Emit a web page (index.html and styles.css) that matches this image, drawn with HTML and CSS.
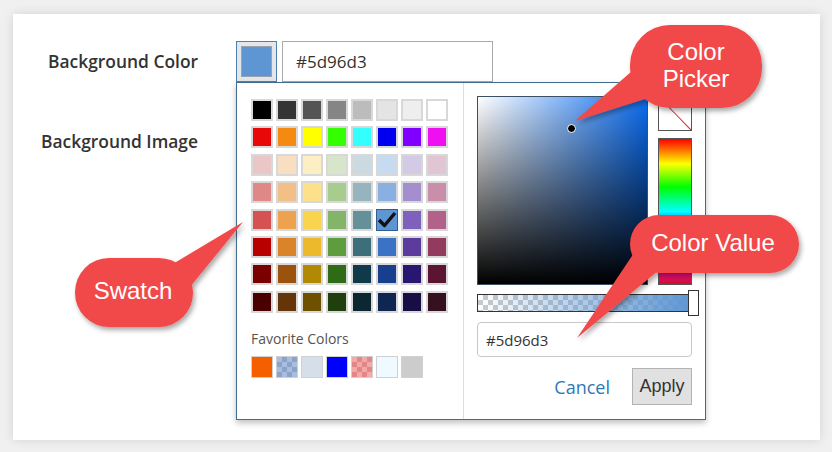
FILE: index.html
```html
<!DOCTYPE html>
<html lang="en">
<head>
    <meta charset="UTF-8">
    <meta name="viewport" content="width=device-width, initial-scale=1.0">
    <title>Color Picker</title>
    <link rel="stylesheet" href="styles.css">
</head>
<body>
    <div class="page">
        <div class="card">
            <div class="field">
                <label class="field-label">Background Color</label>
                <div class="color-control">
                    <button class="swatch-btn" type="button"><span class="swatch-chip"></span></button>
                    <input class="hex-input" type="text" value="#5d96d3">

                    <div class="picker">
                        <div class="picker-left">
                            <div class="swatch-grid">
                                <span class="sw" style="background:#000000"></span>
                                <span class="sw" style="background:#343434"></span>
                                <span class="sw" style="background:#545454"></span>
                                <span class="sw" style="background:#858585"></span>
                                <span class="sw" style="background:#bcbcbc"></span>
                                <span class="sw" style="background:#e4e4e4"></span>
                                <span class="sw" style="background:#eeeeee"></span>
                                <span class="sw" style="background:#ffffff"></span>

                                <span class="sw" style="background:#e80808"></span>
                                <span class="sw" style="background:#f58a10"></span>
                                <span class="sw" style="background:#ffff00"></span>
                                <span class="sw" style="background:#33ff00"></span>
                                <span class="sw" style="background:#33ffff"></span>
                                <span class="sw" style="background:#0000ee"></span>
                                <span class="sw" style="background:#7f00ff"></span>
                                <span class="sw" style="background:#f00ff0"></span>

                                <span class="sw" style="background:#ebc6c6"></span>
                                <span class="sw" style="background:#f8dfc1"></span>
                                <span class="sw" style="background:#fdefc4"></span>
                                <span class="sw" style="background:#d7e5cb"></span>
                                <span class="sw" style="background:#cbdae0"></span>
                                <span class="sw" style="background:#c6daf0"></span>
                                <span class="sw" style="background:#d3cbe5"></span>
                                <span class="sw" style="background:#e2c5d3"></span>

                                <span class="sw" style="background:#e08787"></span>
                                <span class="sw" style="background:#f2c087"></span>
                                <span class="sw" style="background:#fce08a"></span>
                                <span class="sw" style="background:#a8cc8e"></span>
                                <span class="sw" style="background:#95b4bd"></span>
                                <span class="sw" style="background:#8ab0e2"></span>
                                <span class="sw" style="background:#a38fcd"></span>
                                <span class="sw" style="background:#c98ea9"></span>

                                <span class="sw" style="background:#d45252"></span>
                                <span class="sw" style="background:#eda24f"></span>
                                <span class="sw" style="background:#f9d54f"></span>
                                <span class="sw" style="background:#83b569"></span>
                                <span class="sw" style="background:#65909a"></span>
                                <span class="sw sw-selected" style="background:#5d96d3">
                                    <svg viewBox="0 0 20 20" width="20" height="20"><polyline points="2,10 7.5,15.5 18,3" fill="none" stroke="#111" stroke-width="3.4" stroke-linejoin="round"/></svg>
                                </span>
                                <span class="sw" style="background:#7d61bc"></span>
                                <span class="sw" style="background:#b26289"></span>

                                <span class="sw" style="background:#b80000"></span>
                                <span class="sw" style="background:#db8329"></span>
                                <span class="sw" style="background:#ebb92b"></span>
                                <span class="sw" style="background:#5e9d3e"></span>
                                <span class="sw" style="background:#3d6f7b"></span>
                                <span class="sw" style="background:#3a73c5"></span>
                                <span class="sw" style="background:#5b3c9c"></span>
                                <span class="sw" style="background:#933b5f"></span>

                                <span class="sw" style="background:#7a0000"></span>
                                <span class="sw" style="background:#9a520c"></span>
                                <span class="sw" style="background:#b08a05"></span>
                                <span class="sw" style="background:#2f6b16"></span>
                                <span class="sw" style="background:#10394a"></span>
                                <span class="sw" style="background:#173f8d"></span>
                                <span class="sw" style="background:#281670"></span>
                                <span class="sw" style="background:#5c1433"></span>

                                <span class="sw" style="background:#4a0000"></span>
                                <span class="sw" style="background:#643509"></span>
                                <span class="sw" style="background:#6d5000"></span>
                                <span class="sw" style="background:#1f3f0d"></span>
                                <span class="sw" style="background:#0c2730"></span>
                                <span class="sw" style="background:#0f2652"></span>
                                <span class="sw" style="background:#180e45"></span>
                                <span class="sw" style="background:#35101f"></span>
                            </div>

                            <div class="fav-label">Favorite Colors</div>
                            <div class="fav-row">
                                <span class="fav" style="background:#f55f00"></span>
                                <span class="fav fav-check-blue"></span>
                                <span class="fav" style="background:#d6dfe9"></span>
                                <span class="fav" style="background:#0000ff"></span>
                                <span class="fav fav-check-red"></span>
                                <span class="fav" style="background:#eefaff"></span>
                                <span class="fav" style="background:#cccccc"></span>
                            </div>
                        </div>

                        <div class="picker-right">
                            <div class="picker-top">
                                <div class="sv-box">
                                    <span class="sv-pointer"></span>
                                </div>
                                <div class="side-col">
                                    <div class="no-color"></div>
                                    <div class="hue-bar"></div>
                                </div>
                            </div>
                            <div class="alpha-bar">
                                <span class="alpha-handle"></span>
                            </div>
                            <input class="value-input" type="text" value="#5d96d3">
                            <div class="actions">
                                <a class="cancel-link" href="#">Cancel</a>
                                <button class="apply-btn" type="button">Apply</button>
                            </div>
                        </div>
                    </div>
                </div>
            </div>

            <div class="field">
                <label class="field-label">Background Image</label>
            </div>
        </div>

        <!-- annotation callouts -->
        <svg class="callouts" width="832" height="452" viewBox="0 0 832 452">
            <defs>
                <filter id="drop" x="-30%" y="-30%" width="160%" height="170%">
                    <feDropShadow dx="2" dy="3" stdDeviation="2.5" flood-color="#000" flood-opacity="0.35"/>
                </filter>
            </defs>
            <g filter="url(#drop)" fill="#f14a48">
                <rect x="630" y="25" width="132" height="83" rx="40"/>
                <polygon points="575,121 640,64 661,94"/>
            </g>
            <g filter="url(#drop)" fill="#f14a48">
                <rect x="630" y="215" width="169" height="58" rx="29"/>
                <polygon points="577,338 640,244 664,266"/>
            </g>
            <g filter="url(#drop)" fill="#f14a48">
                <rect x="75" y="258" width="118" height="69" rx="34"/>
                <polygon points="243,222 166,268 190,287"/>
            </g>
            <g class="callout-text">
                <text x="696" y="60">Color</text>
                <text x="696" y="87">Picker</text>
                <text x="713" y="251">Color Value</text>
                <text x="133" y="299">Swatch</text>
            </g>
        </svg>
    </div>
</body>
</html>
```

FILE: styles.css
```css
body {
    margin: 0;
    background: #f0f0f0;
    font-family: "Open Sans", "Liberation Sans", sans-serif;
    color: #333;
}
.page {
    position: relative;
    width: 832px;
    height: 452px;
    padding: 14px 12px 12px 13px;
    box-sizing: border-box;
}
.card {
    background: white;
    height: 426px;
    padding-top: 27px;
    box-sizing: border-box;
    box-shadow: 0 0 10px rgba(0,0,0,0.12);
}
.field {
    display: flex;
    margin-bottom: 39px;
}
.field-label {
    width: 185px;
    margin-right: 38px;
    text-align: right;
    font-size: 17.4px;
    font-weight: 600;
    line-height: 40px;
    color: #333;
}
.color-control {
    position: relative;
    display: flex;
}
.swatch-btn {
    width: 41px;
    height: 41px;
    padding: 0;
    border: 1px solid #4f80ae;
    background: #e4e6ea;
    display: flex;
    align-items: center;
    justify-content: center;
}
.swatch-chip {
    width: 29px;
    height: 29px;
    background: #5d96d3;
    border: 1px solid #9aa3ad;
}
.hex-input {
    margin-left: 5px;
    width: 211px;
    height: 41px;
    box-sizing: border-box;
    border: 1px solid #aaa;
    padding: 0 13px;
    font-family: "Open Sans", "Liberation Sans", sans-serif;
    font-size: 17px;
    color: #333;
}

/* popup */
.picker {
    position: absolute;
    top: 41px;
    left: 0;
    width: 470px;
    height: 338px;
    box-sizing: border-box;
    background: white;
    border: 1px solid #3f6d90;
    box-shadow: 0 3px 6px rgba(0,0,0,0.25);
    display: grid;
    grid-template-columns: 226px 1fr;
}
.picker-left {
    padding: 16px 0 0 14px;
}
.swatch-grid {
    display: grid;
    grid-template-columns: repeat(8, 22px);
    grid-auto-rows: 22px;
    gap: 5.4px 3px;
}
.sw {
    box-sizing: border-box;
    border: 2px solid #d8d8d8;
    display: flex;
    align-items: center;
    justify-content: center;
}
.sw-selected {
    border: 1px solid #2f5f90;
}
.fav-label {
    margin-top: 16px;
    font-size: 14px;
    line-height: 20px;
    color: #555;
}
.fav-row {
    display: flex;
    gap: 3px;
    margin-top: 7px;
}
.fav {
    width: 22px;
    height: 22px;
    box-sizing: border-box;
    border: 1px solid #d0d0d0;
}
.fav-check-blue {
    background-color: #a9bedf;
    background-image: linear-gradient(45deg, #8aa3c9 25%, transparent 25%, transparent 75%, #8aa3c9 75%),
                      linear-gradient(45deg, #8aa3c9 25%, transparent 25%, transparent 75%, #8aa3c9 75%);
    background-size: 10px 10px;
    background-position: 0 0, 5px 5px;
}
.fav-check-red {
    background-color: #f4a9a9;
    background-image: linear-gradient(45deg, #e38686 25%, transparent 25%, transparent 75%, #e38686 75%),
                      linear-gradient(45deg, #e38686 25%, transparent 25%, transparent 75%, #e38686 75%);
    background-size: 10px 10px;
    background-position: 0 0, 5px 5px;
}

.picker-right {
    border-left: 1px solid #ddd;
    padding: 13px 13px 0 13px;
}
.picker-top {
    display: flex;
    gap: 10px;
}
.sv-box {
    position: relative;
    width: 171px;
    height: 189px;
    box-sizing: border-box;
    border: 1px solid #3b4f66;
    background: linear-gradient(to top, #000, rgba(0,0,0,0)),
                linear-gradient(to right, #fff, #0a6cf0);
}
.sv-pointer {
    position: absolute;
    left: 89px;
    top: 27px;
    width: 7px;
    height: 7px;
    border-radius: 50%;
    background: #000;
    border: 1.5px solid #fff;
}
.side-col {
    display: flex;
    flex-direction: column;
    gap: 7px;
}
.no-color {
    width: 34px;
    height: 35px;
    box-sizing: border-box;
    border: 1px solid #555;
    background: linear-gradient(to top right, transparent calc(50% - 1px), #c33 50%, transparent calc(50% + 1px)), #fff;
}
.hue-bar {
    width: 34px;
    height: 147px;
    box-sizing: border-box;
    border: 1px solid #555;
    background: linear-gradient(to bottom, #f00 0%, #ff0 17%, #0f0 33%, #0ff 50%, #00f 67%, #f0f 83%, #d0102a 100%);
}
.alpha-bar {
    position: relative;
    margin-top: 9px;
    height: 18px;
    box-sizing: border-box;
    border: 1px solid #333;
    background: linear-gradient(to right, rgba(93,150,211,0), #5d96d3),
                linear-gradient(45deg, #c9c9c9 25%, transparent 25%, transparent 75%, #c9c9c9 75%),
                linear-gradient(45deg, #c9c9c9 25%, #fff 25%, #fff 75%, #c9c9c9 75%);
    background-size: 100% 100%, 10px 10px, 10px 10px;
    background-position: 0 0, 0 0, 5px 5px;
}
.alpha-handle {
    position: absolute;
    right: -8px;
    top: -5px;
    width: 9px;
    height: 24px;
    background: white;
    border: 1px solid #333;
}
.value-input {
    display: block;
    margin-top: 10px;
    width: 215px;
    height: 35px;
    box-sizing: border-box;
    border: 1px solid #c8c8c8;
    border-radius: 4px;
    padding: 0 8px;
    font-family: "Open Sans", "Liberation Sans", sans-serif;
    font-size: 15px;
    color: #333;
}
.actions {
    display: flex;
    justify-content: flex-end;
    align-items: center;
    gap: 22px;
    margin-top: 11px;
}
.cancel-link {
    color: #2f78b4;
    font-size: 18px;
    text-decoration: none;
}
.apply-btn {
    width: 60px;
    height: 37px;
    padding: 0;
    background: #e1e1e1;
    border: 1px solid #b3b3b3;
    font-family: "Liberation Sans", Arial, sans-serif;
    font-size: 18px;
    color: #333;
}

.callouts {
    position: absolute;
    top: 0;
    left: 0;
    pointer-events: none;
}
.callout-text text {
    font-family: "Liberation Sans", Arial, sans-serif;
    font-size: 24px;
    fill: white;
    text-anchor: middle;
}
```
